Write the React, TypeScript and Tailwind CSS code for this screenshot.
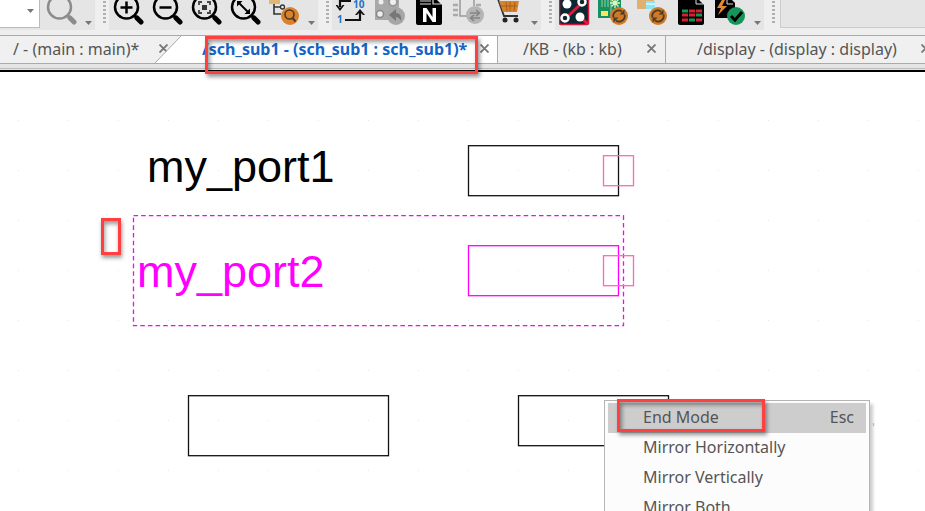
import type { ReactNode } from 'react';

const CARET = <path d="M0 0h7L3.5 4z" fill="#777" />;

function Lens({ color = '#000', children }: { color?: string; children?: ReactNode }) {
  return (
    <>
      <path d="M21.500 15.500l2 2" stroke={color} strokeWidth="3" fill="none" />
      <path d="M24 18l4 4" stroke={color} strokeWidth="5" strokeLinecap="round" fill="none" />
      <circle cx="13.500" cy="7" r="11.500" fill="none" stroke={color} strokeWidth="2.500" />
      {children}
    </>
  );
}

function Refresh({ cx, cy }: { cx: number; cy: number }) {
  return (
    <g transform={`translate(${cx} ${cy})`}>
      <circle r="9" fill="#d07a28" />
      <path d="M-5.500 1.500a5.500 5.500 0 0 1 8.500-6M5.500-1.500a5.500 5.500 0 0 1-8.500 6" fill="none" stroke="#4a3a2a" strokeWidth="1.800" />
      <path d="M5.500-6.500v5h-5zM-5.500 6.500v-5h5z" fill="#4a3a2a" />
    </g>
  );
}

const VIEW_TOOLS = [
  { label: 'Zoom in', art: <Lens><path d="M7.500 7.500h12M13.500 1.500v12" stroke="#000" strokeWidth="2.500" /></Lens> },
  { label: 'Zoom out', art: <Lens><path d="M7.500 7.500h12" stroke="#000" strokeWidth="2.500" /></Lens> },
  {
    label: 'Zoom to fit',
    art: (
      <Lens>
        <path d="M8 5V2h3M16 2h3v3M19 10v3h-3M11 13H8v-3" fill="none" stroke="#444" strokeWidth="1.800" />
        <rect x="11" y="5" width="5" height="5" fill="#333" />
      </Lens>
    ),
  },
  {
    label: 'Zoom to selection',
    art: (
      <Lens>
        <path d="M9 3l9 9" stroke="#000" strokeWidth="2" />
        <path d="M7 1h5.500L7 6.500zM20 14h-5.500L20 8.500z" fill="#000" />
      </Lens>
    ),
  },
  {
    label: 'Find in hierarchy',
    art: (
      <>
        <path d="M0-6h11v10H0z" fill="#dfb877" />
        <path d="M5 4v10h7M5 7h6" fill="none" stroke="#333" strokeWidth="1.600" />
        <circle cx="13.500" cy="7" r="2" fill="#eee" stroke="#333" strokeWidth="1.300" />
        <circle cx="21" cy="16" r="9" fill="#d9822b" />
        <circle cx="20.500" cy="14.500" r="4.500" fill="none" stroke="#4a3a2a" strokeWidth="1.600" />
        <path d="M23.500 18l3 3.500" stroke="#4a3a2a" strokeWidth="2" />
      </>
    ),
  },
];

const DESIGN_TOOLS = [
  {
    label: 'Annotate',
    art: (
      <>
        <path d="M15 1H4v6M9 20h15V12" fill="none" stroke="#111" strokeWidth="2.200" />
        <path d="M-.5 5h2l2.500 3L6.500 5h2L4 11zM19 15l5-6 5 6h-2l-3-3-3 3z" fill="#111" />
        <g fill="#2272c3" fontFamily="Noto Sans, sans-serif" fontWeight="700" fontSize="10">
          <text x="17" y="8">10</text>
          <text x="1" y="23">1</text>
        </g>
      </>
    ),
  },
  {
    label: 'Back annotate',
    art: (
      <>
        <path d="M0-5h24v12L14 20H0z" fill="#a9a9a9" />
        <circle cx="5" cy="14" r="3.500" fill="#eee" stroke="#888" strokeWidth="1.500" />
        <circle cx="6" cy="2" r="2.500" fill="#eee" />
        <circle cx="18" cy="2" r="4" fill="#eee" stroke="#999" strokeWidth="2" />
        <circle cx="21" cy="16" r="9" fill="#a6a6a6" />
        <path d="M14 15l7-6v4q6 0 5 8-2-4-5-4v4z" fill="#777" />
      </>
    ),
  },
  {
    label: 'Netlist',
    art: (
      <>
        <path d="M4-4h15l9 9v18q0 2-2 2H4q-2 0-2-2V-2z" fill="#000" />
        <path d="M19-3v7h8M6 4h11M6 1h11" fill="none" stroke="#ddd" strokeWidth="1.200" />
        <path d="M9 22V8h3.500l6 9V8H22v14h-3.500l-6-9v9z" fill="#fff" />
      </>
    ),
  },
  {
    label: 'Assign footprints',
    art: (
      <>
        <path d="M0 5h5M0 10h5M0 15h5M23 5h5" stroke="#aaa" strokeWidth="2.500" />
        <path d="M7-2v18h7M21-2v8" fill="none" stroke="#999" strokeWidth="1.500" />
        <circle cx="22" cy="15" r="9" fill="#b5b5b5" />
        <path d="M17 13h9M27 18h-9M23 10l3.500 3-3.500 3M21 15l-3.500 3 3.500 3" fill="none" stroke="#858585" strokeWidth="1.600" />
      </>
    ),
  },
  {
    label: 'Bill of materials',
    art: (
      <>
        <path d="M2-1h4l6 17h14" fill="none" stroke="#333" strokeWidth="1.800" />
        <path d="M7 1h20l-2 11H11z" fill="#d9822b" />
        <path d="M14 2l1 9M18 2v9M23 2l-1 9M9 6h16" stroke="#a65e18" />
        <circle cx="13" cy="20" r="2.500" fill="#222" />
        <circle cx="24" cy="20" r="2.500" fill="#222" />
      </>
    ),
  },
];

const BOARD_TOOLS = [
  {
    label: 'Open board',
    art: (
      <>
        <rect x="0" y="-5" width="30" height="30" rx="2" fill="#0a2733" />
        <path d="M.5 0v22.500q0 2 2 2h25q2 0 2-2V0" fill="none" stroke="#d6173a" strokeWidth="1.500" />
        <path d="M7 18L23 3M21 17l8 7" stroke="#e0193c" strokeWidth="3" />
        <g fill="#fff">
          <circle cx="8" cy="4" r="4.500" />
          <circle cx="21" cy="17" r="4.500" />
        </g>
        <g fill="#0a2733" stroke="#fff" strokeWidth="2.500">
          <circle cx="23" cy="2" r="3.500" />
          <circle cx="6" cy="18" r="3.500" />
        </g>
      </>
    ),
  },
  {
    label: 'Update board',
    art: (
      <>
        <rect x="0" y="-5" width="23" height="23" fill="#159161" />
        <path d="M4 0v7M7 0v7M10 0v7M13 0v18" fill="none" stroke="#9bd3a6" />
        <path d="M17-2v10M12 3h10M13.500-.5l7 7M20.500-.5l-7 7" stroke="#e0f5c0" strokeWidth="1.300" />
        <rect x="3" y="11" width="7" height="5" fill="#ffe45c" />
        <Refresh cx={21} cy={16} />
      </>
    ),
  },
  {
    label: 'Update symbols',
    art: (
      <>
        <rect x="0" y="-4" width="17" height="13" fill="#dfb070" />
        <path d="M9 1h9v8H9z" fill="#8fe4f3" />
        <path d="M9 4h9" stroke="#fff" />
        <Refresh cx={21} cy={16} />
      </>
    ),
  },
  {
    label: 'Edit symbol fields',
    art: (
      <>
        <path d="M2-4h17l9 9v18q0 2-2 2H4q-2 0-2-2z" fill="#000" />
        <path d="M20-3v7h7" fill="none" stroke="#ddd" />
        <path d="M6 11h6M20 15h6M13 20h6" stroke="#17945a" strokeWidth="3" />
        <path d="M13 11h6M20 11h6M6 15h6M13 15h6M6 20h6M20 20h6" stroke="#d7222c" strokeWidth="3" />
      </>
    ),
  },
  {
    label: 'Electrical rules check',
    art: (
      <>
        <path d="M0-5h12l8 8v15H0z" fill="#000" />
        <path d="M12-1v5h6" fill="none" stroke="#ddd" />
        <path d="M8-2L2 8h4l-3 7 9-9H7l4-8z" fill="#e58a2b" />
        <circle cx="21" cy="16" r="9" fill="#17945a" />
        <path d="M16 16l4 4 7-8" fill="none" stroke="#000" strokeWidth="3" />
      </>
    ),
  },
];

const MENU = [
  { label: 'End Mode', keys: 'Esc' },
  { label: 'Mirror Horizontally' },
  { label: 'Mirror Vertically' },
  { label: 'Mirror Both' },
];

type Tool = { label: string; art: ReactNode };

function ToolButton({ label, art }: Tool) {
  return (
    <button aria-label={label} className="flex h-7 w-[39px] shrink-0 justify-center">
      <svg width="31" height="28" viewBox="0 0 31 28">{art}</svg>
    </button>
  );
}

function Caret() {
  return (
    <button aria-label="More tools" className="flex h-7 w-[14px] shrink-0 items-end justify-center pb-[3px]">
      <svg width="7" height="4">{CARET}</svg>
    </button>
  );
}

function ToolGroup({ tools }: { tools: Tool[] }) {
  return (
    <div className="flex shrink-0 bg-[#e5e5e5]">
      {tools.map(t => <ToolButton key={t.label} {...t} />)}
      <Caret />
    </div>
  );
}

function Grip() {
  return (
    <div className="flex w-[14px] shrink-0 justify-center pl-1">
      <svg width="3" height="24" shapeRendering="crispEdges">
        <path d="M1.500 1v23" stroke="#b0b0b0" strokeWidth="3" strokeDasharray="2 2" />
      </svg>
    </div>
  );
}

function CloseButton({ name }: { name: string }) {
  return (
    <button aria-label={`Close ${name}`} className="shrink-0">
      <svg width="9" height="9" viewBox="0 0 9 9">
        <path d="M.5.500l8 8M8.500.500l-8 8" stroke="#777" strokeWidth="1.800" />
      </svg>
    </button>
  );
}

export default function App() {
  return (
    <div className="flex h-screen flex-col overflow-hidden bg-white font-['Noto_Sans',sans-serif] text-base text-[#555]">
      {/* Toolbar */}
      <header className="flex h-[35px] shrink-0 overflow-hidden bg-[#efefef] pb-[5px]">
        <div className="flex shrink-0 bg-[#e5e5e5]">
          <button aria-label="Grid size" className="flex h-7 w-[40px] items-start justify-end border-r border-b border-[#bbb] bg-white pt-[9px] pr-[5px]">
            <svg width="7" height="4">{CARET}</svg>
          </button>
          <div className="flex pl-[2px]">
            <ToolButton label="Search" art={<Lens color="#8c8c8c" />} />
            <Caret />
          </div>
        </div>
        <Grip />
        <ToolGroup tools={VIEW_TOOLS} />
        <Grip />
        <ToolGroup tools={DESIGN_TOOLS} />
        <Grip />
        <ToolGroup tools={BOARD_TOOLS} />
        <Grip />
        <div className="ml-0.5 h-7 flex-1 border-b border-l border-[#ccc] bg-[#e5e5e5]" />
      </header>

      {/* Sheet tabs */}
      <nav className="relative flex h-[29px] shrink-0 border-y border-[#aaa] bg-[#f0f0f0] whitespace-nowrap">
        <div className="flex w-[181px] shrink-0 items-center justify-between px-[13px] pb-0.5">
          <a href="#main">/ - (main : main)*</a>
          <CloseButton name="main" />
        </div>
        <svg width="26" height="27" className="-ml-[26px] shrink-0">
          <path d="M0 27L26 0v27z" fill="#fff" />
          <path d="M0 27L26 0" stroke="#aaa" />
        </svg>
        <div className="flex w-[317px] shrink-0 items-center justify-between border-r border-[#aaa] bg-white pr-2 pb-0.5 pl-[21px]">
          <a href="#sch_sub1" className="font-bold text-[#1464c8]">/sch_sub1 - (sch_sub1 : sch_sub1)*</a>
          <CloseButton name="sch_sub1" />
        </div>
        <div className="flex w-[168px] shrink-0 items-center justify-between border-r border-[#aaa] pr-[9px] pb-0.5 pl-[25px]">
          <a href="#kb">/KB - (kb : kb)</a>
          <CloseButton name="kb" />
        </div>
        <div className="flex shrink-0 items-center gap-6 pb-0.5 pl-[31px]">
          <a href="#display">/display - (display : display)</a>
          <CloseButton name="display" />
        </div>
        <div className="absolute top-0 left-[205px] h-[38px] w-[273px] border-[3px] border-[#ff4040] shadow-[2px_3px_4px_rgba(0,0,0,0.4),inset_2px_3px_4px_rgba(0,0,0,0.4)]" />
      </nav>
      <div className="h-[8px] shrink-0 border-b-2 border-black bg-[#e5e5e5] pt-1">
        <div className="h-px bg-[#bbb]" />
      </div>

      {/* Schematic canvas */}
      <main className="relative flex-1">
        <svg className="h-full w-full" fill="none" strokeWidth="1.300">
          <defs>
            <pattern id="grid" x="18" y="48" width="50" height="50" patternUnits="userSpaceOnUse">
              <rect width="1" height="1" fill="#d3ecfa" />
            </pattern>
          </defs>
          <rect y="40" width="100%" height="100%" fill="url(#grid)" />
          <g stroke="#111">
            <rect x="468.500" y="73.700" width="150" height="50" />
            <rect x="188.500" y="323.700" width="200" height="60" />
            <rect x="518.500" y="323.700" width="150" height="50" />
          </g>
          <g stroke="#ff00ff">
            <rect x="468.500" y="173.700" width="150" height="50" />
            <rect x="133.500" y="143.700" width="490" height="110" strokeDasharray="4.600 3.050" />
          </g>
          <g stroke="#ff69b4">
            <rect x="603.500" y="83.700" width="30" height="30" />
            <rect x="603.500" y="183.700" width="30" height="30" />
          </g>
          <g fontFamily="Liberation Sans, Arial, sans-serif" fontSize="45">
            <text x="147" y="110" fill="#000">my_port1</text>
            <text x="137" y="215" fill="#f0f">my_port2</text>
          </g>
          <path d="M873.500 351v3" stroke="#f7a8f7" />
        </svg>

        <div className="absolute top-[146px] left-[101px] h-[37px] w-5 border-[3px] border-[#ff4040] shadow-[1px_3px_4px_rgba(0,0,0,0.4),inset_1px_3px_4px_rgba(0,0,0,0.4)]" />

        <div role="menu" className="absolute top-[328px] left-[604px] w-[266px] border border-[#b5b5b5] bg-[#fcfcfc] px-[3px] py-[2px] shadow-[3px_4px_3px_rgba(0,0,0,0.2)]">
          {MENU.map((item, i) => (
            <button
              key={item.label}
              role="menuitem"
              className={`flex h-[30px] w-full items-center justify-between pr-3 pb-0.5 pl-[35px] ${i === 0 ? 'bg-[#cdcdcd]' : ''}`}
            >
              <span>{item.label}</span>
              {item.keys && <span>{item.keys}</span>}
            </button>
          ))}
          <div className="absolute -top-[2px] left-3 h-[33px] w-[148px] border-[3px] border-[#ff4040] shadow-[2px_3px_4px_rgba(0,0,0,0.4),inset_2px_3px_4px_rgba(0,0,0,0.4)]" />
        </div>
      </main>
    </div>
  );
}
